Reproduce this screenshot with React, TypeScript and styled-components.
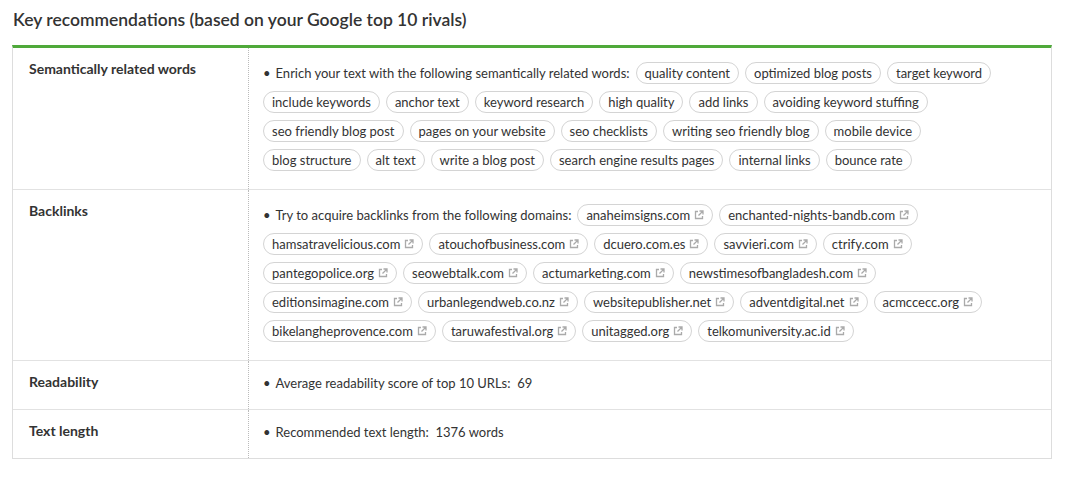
import React from "react";
import styled, { createGlobalStyle } from "styled-components";

const Global = createGlobalStyle`
  body { margin: 0; background: #fff; font-family: Lato, "Noto Sans", sans-serif; color: #333; }
`;

const Page = styled.div`
  padding: 8px 16px 20px 12px;
  width: 1040px;
`;

const Title = styled.h2`
  margin: 0 0 13px 1px;
  font-size: 17.5px;
  font-weight: 600;
  color: #333;
  line-height: 24px;
`;

const Table = styled.div`
  border: 1px solid #ddd;
  border-top: 3px solid #4fa93a;
`;

const Row = styled.div`
  display: grid;
  grid-template-columns: 236px 1fr;
  border-bottom: 1px solid #e2e2e2;
  &:last-child { border-bottom: none; }
`;

const Label = styled.div`
  padding: 12px 16px;
  font-size: 14px;
  font-weight: 700;
  color: #333;
  border-right: 1px dotted #bbb;
`;

const Body = styled.div`
  padding: 14px 20px 18px 14px;
  display: flex;
  flex-direction: column;
  gap: 7px;
  font-size: 13px;
`;

const Line = styled.div`
  display: flex;
  align-items: center;
  gap: 6px;
  white-space: nowrap;
`;

const Lead = styled.span`
  &::before { content: "•"; margin-right: 5px; }
`;

const Chip = styled.span`
  display: inline-flex;
  align-items: center;
  gap: 4px;
  height: 20px;
  padding: 0 8px;
  border: 1px solid #d4d4d4;
  border-radius: 12px;
  color: #333;
`;

const Ext = () => (
  <svg width="10" height="10" viewBox="0 0 10 10" fill="none" stroke="#aaa" strokeWidth="1.3">
    <path d="M4 1.5H1.5v7h7V6" />
    <path d="M5.5 1h3.5v3.5M9 1L4.5 5.5" />
  </svg>
);

const words = [
  ["quality content", "optimized blog posts", "target keyword"],
  ["include keywords", "anchor text", "keyword research", "high quality", "add links", "avoiding keyword stuffing"],
  ["seo friendly blog post", "pages on your website", "seo checklists", "writing seo friendly blog", "mobile device"],
  ["blog structure", "alt text", "write a blog post", "search engine results pages", "internal links", "bounce rate"],
];

const domains = [
  ["anaheimsigns.com", "enchanted-nights-bandb.com"],
  ["hamsatravelicious.com", "atouchofbusiness.com", "dcuero.com.es", "savvieri.com", "ctrify.com"],
  ["pantegopolice.org", "seowebtalk.com", "actumarketing.com", "newstimesofbangladesh.com"],
  ["editionsimagine.com", "urbanlegendweb.co.nz", "websitepublisher.net", "adventdigital.net", "acmccecc.org"],
  ["bikelangheprovence.com", "taruwafestival.org", "unitagged.org", "telkomuniversity.ac.id"],
];

export default function App() {
  return (
    <Page>
      <Global />
      <Title>Key recommendations (based on your Google top 10 rivals)</Title>
      <Table>
        <Row>
          <Label>Semantically related words</Label>
          <Body>
            {words.map((line, i) => (
              <Line key={i}>
                {i === 0 && <Lead>Enrich your text with the following semantically related words:</Lead>}
                {line.map((w) => <Chip key={w}>{w}</Chip>)}
              </Line>
            ))}
          </Body>
        </Row>
        <Row>
          <Label>Backlinks</Label>
          <Body>
            {domains.map((line, i) => (
              <Line key={i}>
                {i === 0 && <Lead>Try to acquire backlinks from the following domains:</Lead>}
                {line.map((d) => <Chip key={d}>{d}<Ext /></Chip>)}
              </Line>
            ))}
          </Body>
        </Row>
        <Row>
          <Label>Readability</Label>
          <Body><Line><Lead>Average readability score of top 10 URLs:&nbsp; 69</Lead></Line></Body>
        </Row>
        <Row>
          <Label>Text length</Label>
          <Body><Line><Lead>Recommended text length:&nbsp; 1376 words</Lead></Line></Body>
        </Row>
      </Table>
    </Page>
  );
}
